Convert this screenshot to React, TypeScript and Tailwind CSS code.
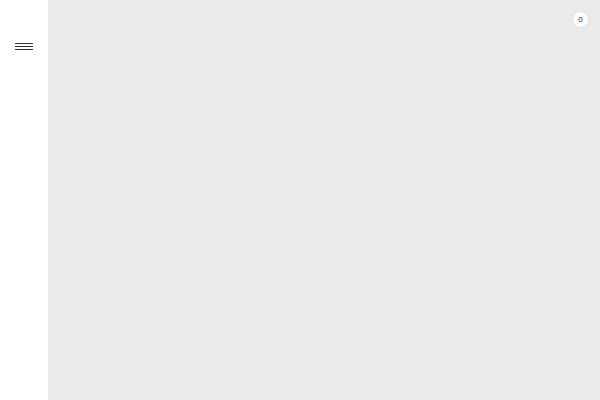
export default function App() {
  return (
    <div className="flex h-[400px] w-[600px] overflow-hidden font-['Liberation_Sans',sans-serif]">
      <aside className="flex w-[48px] shrink-0 flex-col items-center bg-white pt-[43px]">
        <button className="flex w-[18px] flex-col gap-[2px]" aria-label="menu">
          <span className="h-px w-full bg-[#333]" />
          <span className="h-px w-full bg-[#333]" />
          <span className="h-px w-full bg-[#333]" />
        </button>
      </aside>
      <main className="flex flex-1 justify-end bg-[#eaeaea] pr-[12px] pt-[12px]">
        <span className="flex h-[15px] w-[15px] items-center justify-center rounded-full bg-white text-[8px] text-[#222] shadow-[0_0_3px_rgba(0,0,0,0.08)]">
          0
        </span>
      </main>
    </div>
  );
}
